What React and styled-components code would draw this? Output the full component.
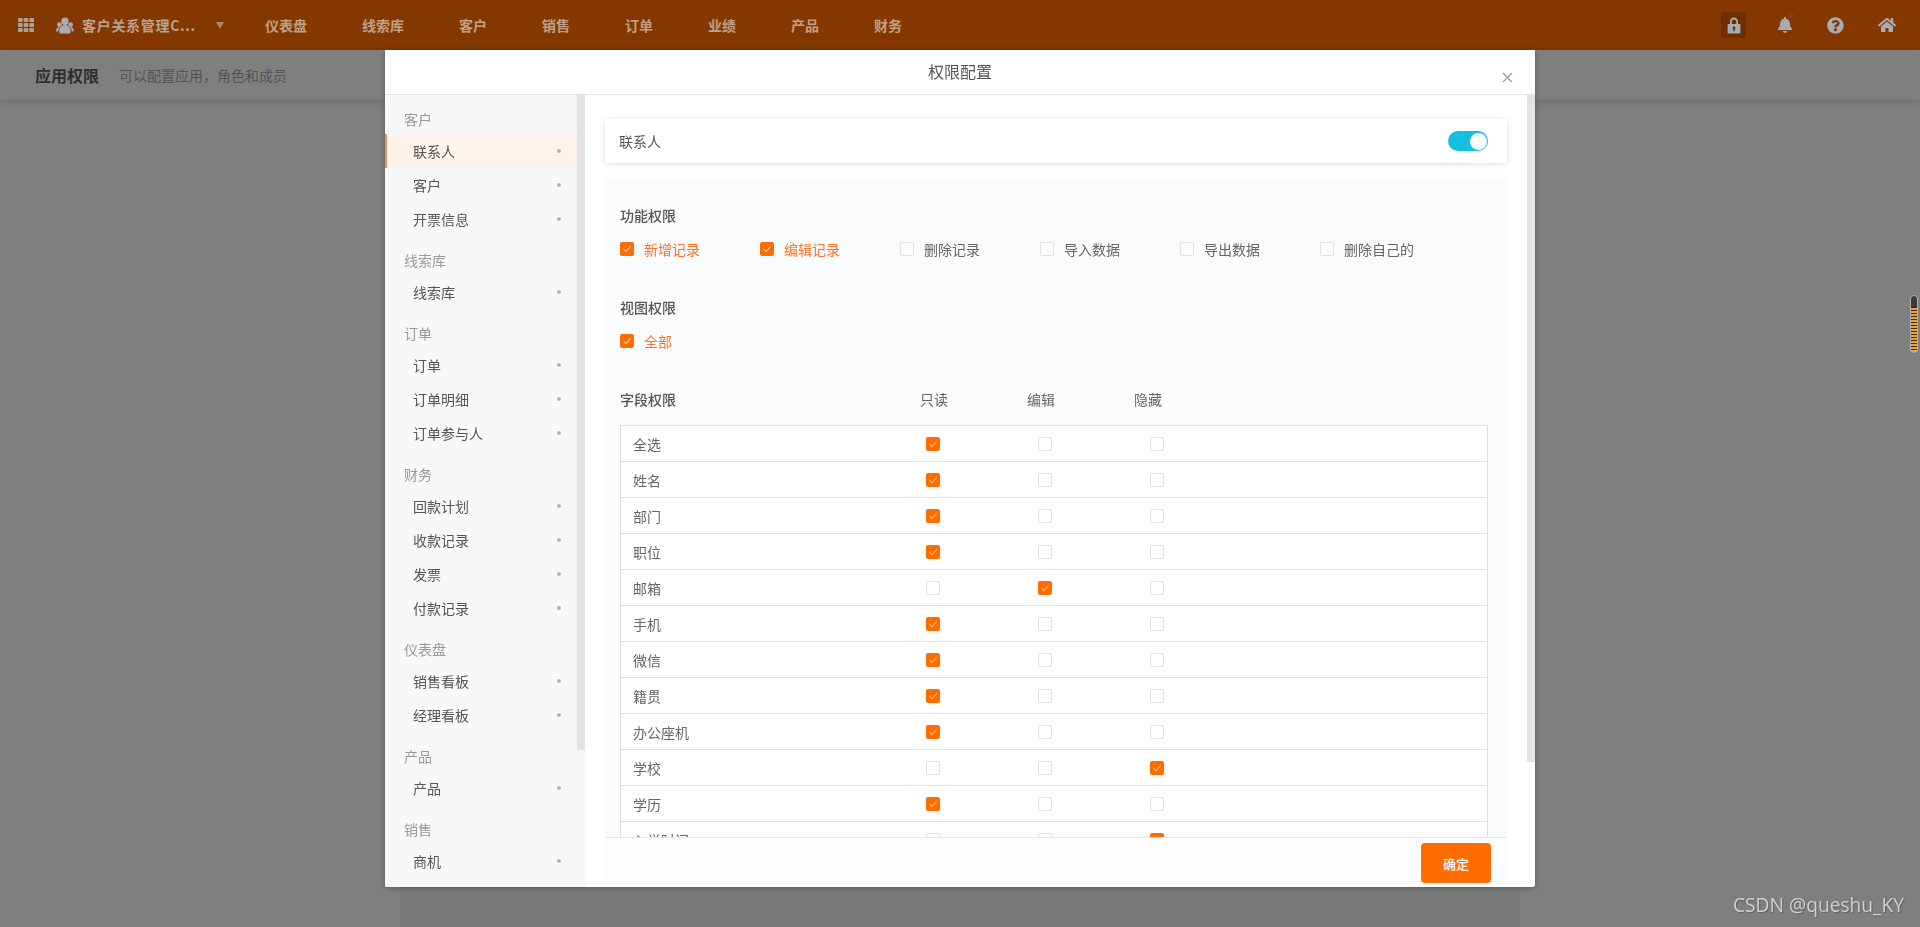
import styled, { createGlobalStyle } from 'styled-components'
import { X } from 'lucide-react'
import { FaTh, FaBell, FaQuestionCircle, FaHome } from 'react-icons/fa'

const NAV = ['仪表盘', '线索库', '客户', '销售', '订单', '业绩', '产品', '财务']

const MENU = [
  { title: '客户', items: ['联系人', '客户', '开票信息'] },
  { title: '线索库', items: ['线索库'] },
  { title: '订单', items: ['订单', '订单明细', '订单参与人'] },
  { title: '财务', items: ['回款计划', '收款记录', '发票', '付款记录'] },
  { title: '仪表盘', items: ['销售看板', '经理看板'] },
  { title: '产品', items: ['产品'] },
  { title: '销售', items: ['商机'] },
]

const ACTIONS = [
  { label: '新增记录', on: true },
  { label: '编辑记录', on: true },
  { label: '删除记录' },
  { label: '导入数据' },
  { label: '导出数据' },
  { label: '删除自己的' },
]

// mode: 0 只读, 1 编辑, 2 隐藏
const FIELDS = [
  ['全选', 0], ['姓名', 0], ['部门', 0], ['职位', 0], ['邮箱', 1], ['手机', 0],
  ['微信', 0], ['籍贯', 0], ['办公座机', 0], ['学校', 2], ['学历', 0], ['入学时间', 2],
]

export default function App() {
  return (
    <>
      <GlobalStyle />
      <TopBar>
        <GridButton><FaTh size={16} /></GridButton>
        <AppName>
          <TeamIcon />
          <span>客户关系管理C...</span>
          <Caret />
        </AppName>
        <Nav>
          {NAV.map((n) => <NavItem key={n}>{n}</NavItem>)}
        </Nav>
        <Tools>
          <ToolButton $active><LockIcon /></ToolButton>
          <ToolButton>
            <FaBell size={16} />
            <BellDot />
          </ToolButton>
          <ToolButton><FaQuestionCircle size={17} /></ToolButton>
          <ToolButton><FaHome size={18} /></ToolButton>
        </Tools>
      </TopBar>
      <SubHeader>
        <PageTitle>应用权限</PageTitle>
        <PageHint>可以配置应用，角色和成员</PageHint>
      </SubHeader>
      <PageCard />

      <Overlay>
        <Modal>
          <ModalHeader>
            权限配置
            <CloseButton><X size={17} strokeWidth={1.6} /></CloseButton>
          </ModalHeader>
          <ModalBody>
            <Sidebar>
              {MENU.map((group) => (
                <MenuGroup key={group.title}>
                  <MenuTitle>{group.title}</MenuTitle>
                  {group.items.map((item, i) => (
                    <MenuItem key={item} $active={group.title === '客户' && i === 0}>
                      {item}
                      <Dot />
                    </MenuItem>
                  ))}
                </MenuGroup>
              ))}
              <ScrollThumb $height={655} />
            </Sidebar>
            <Main>
              <Scroller>
                <ContactCard>
                  联系人
                  <Toggle />
                </ContactCard>
                <Section>
                  <SectionTitle>功能权限</SectionTitle>
                  <CheckRow>
                    {ACTIONS.map((a) => (
                      <CheckItem key={a.label} $on={a.on}>
                        <CheckBox on={a.on} />
                        {a.label}
                      </CheckItem>
                    ))}
                  </CheckRow>

                  <SectionTitle>视图权限</SectionTitle>
                  <CheckRow>
                    <CheckItem $on>
                      <CheckBox on />
                      全部
                    </CheckItem>
                  </CheckRow>

                  <FieldHead>
                    <strong>字段权限</strong>
                    <span>只读</span>
                    <span>编辑</span>
                    <span>隐藏</span>
                  </FieldHead>
                  <FieldTable>
                    {FIELDS.map(([name, mode]) => (
                      <FieldRow key={name}>
                        <FieldName>{name}</FieldName>
                        {[0, 1, 2].map((m) => <CheckBox key={m} on={m === mode} />)}
                      </FieldRow>
                    ))}
                  </FieldTable>
                </Section>
                <ScrollThumb $height={667} />
              </Scroller>
              <ModalFooter>
                <OkButton>确定</OkButton>
              </ModalFooter>
            </Main>
          </ModalBody>
        </Modal>
      </Overlay>

      <Watermark>CSDN @queshu_KY</Watermark>
      <SideGadget />
    </>
  )
}

function CheckBox({ on }) {
  return (
    <Box $on={on}>
      {on && (
        <svg width="10" height="10" viewBox="0 0 10 10" fill="none">
          <path d="M1.5 5.2 L4 7.6 L8.6 2.4" stroke="#fff" strokeWidth="0.9" />
        </svg>
      )}
    </Box>
  )
}

function TeamIcon() {
  return (
    <svg width="18" height="17" viewBox="0 0 18 17" fill="currentColor">
      <circle cx="9" cy="4.200" r="3.700" />
      <path d="M3.800 16.500c-.4-.8-.5-1.700-.5-2.600 0-3.300 2.300-6 5.700-6s5.700 2.700 5.700 6c0 .9-.1 1.800-.5 2.600z" />
      <circle cx="3.400" cy="7.600" r="2.400" />
      <circle cx="14.600" cy="7.600" r="2.400" />
      <path d="M.2 14.500c-.2-2.600 1-4.400 3.100-4.400l.6.100c-1.100 1.100-1.600 2.500-1.600 4.300zM17.800 14.500c.2-2.600-1-4.400-3.100-4.400l-.6.100c1.100 1.100 1.600 2.500 1.600 4.300z" />
    </svg>
  )
}

function LockIcon() {
  return (
    <svg width="16" height="17" viewBox="0 0 16 17">
      <path
        fillRule="evenodd"
        fill="currentColor"
        d="M4 7V4.600C4 2.300 5.700.6 8 .6s4 1.700 4 4V7h1.200c.7 0 1.200.5 1.200 1.200v7.200c0 .7-.5 1.200-1.200 1.200H2.800c-.7 0-1.200-.5-1.200-1.200V8.200C1.600 7.500 2.100 7 2.800 7H4zm1.800 0h4.400V4.600c0-1.300-.9-2.200-2.200-2.200s-2.200.9-2.200 2.200V7zM8 9.600a1.400 1.400 0 0 0-.7 2.600v2h1.400v-2A1.400 1.400 0 0 0 8 9.600z"
      />
    </svg>
  )
}

const GlobalStyle = createGlobalStyle`
  html, body {
    margin: 0;
    height: 100%;
    overflow: hidden;
    background: #fff;
  }

  body {
    font-family: "Noto Sans CJK SC", "Liberation Sans", sans-serif;
    font-size: 14px;
    color: #555;
  }

  #root {
    height: 100%;
    display: flex;
    flex-direction: column;
  }
`

const TopBar = styled.header`
  flex: none;
  height: 50px;
  display: flex;
  align-items: center;
  background: #843800;
  color: #c0a084;
`

const GridButton = styled.div`
  width: 50px;
  display: flex;
  padding-left: 18px;
  box-sizing: border-box;
  color: #a9a295;
`

const AppName = styled.div`
  width: 215px;
  display: flex;
  align-items: center;
  padding-left: 6px;
  box-sizing: border-box;
  font-weight: 700;
  letter-spacing: 0.7px;
  color: #b5a493;

  svg {
    flex: none;
    color: #a6acb2;
    margin-right: 8px;
  }
`

const Caret = styled.i`
  margin-left: 20px;
  border-style: solid;
  border-width: 7px 4.500px 0;
  border-color: #a38a70 transparent transparent;
`

const Nav = styled.nav`
  display: flex;
  gap: 55px;
`

const NavItem = styled.a`
  font-weight: 700;
  line-height: 20px;
`

const Tools = styled.div`
  margin-left: auto;
  margin-right: 21px;
  display: flex;
  gap: 26px;
  align-items: center;
`

const ToolButton = styled.div`
  position: relative;
  width: 25px;
  height: 26px;
  display: flex;
  align-items: center;
  justify-content: center;
  color: #a6acb2;
  background: ${(p) => (p.$active ? '#6f2e00' : 'transparent')};
`

const BellDot = styled.i`
  position: absolute;
  top: 1px;
  right: 3px;
  width: 5px;
  height: 5px;
  border-radius: 50%;
  background: #a3293a;
`

const SubHeader = styled.div`
  flex: none;
  height: 50px;
  display: flex;
  align-items: center;
  padding-left: 35px;
  background: #fff;
  box-shadow: 0 2px 6px rgba(0, 0, 0, 0.16);
  position: relative;
`

const PageTitle = styled.h1`
  margin: 0 20px 0 0;
  font-size: 16px;
  font-weight: 700;
  color: #5c5c5c;
`

const PageHint = styled.span`
  color: #a8a8a8;
`

const PageCard = styled.main`
  flex: 1;
  width: 1120px;
  margin: 16px auto 0;
  background: #f4f4f4;
`

const Overlay = styled.div`
  position: fixed;
  inset: 50px 0 0;
  display: flex;
  justify-content: center;
  align-items: flex-start;
  background: rgba(0, 0, 0, 0.5);
`

const Modal = styled.section`
  width: 1150px;
  height: 837px;
  display: flex;
  flex-direction: column;
  background: #fff;
  border-radius: 0 0 2px 2px;
  box-shadow: 0 1px 6px rgba(0, 0, 0, 0.3);
  overflow: hidden;
`

const ModalHeader = styled.div`
  position: relative;
  flex: none;
  height: 44px;
  line-height: 42px;
  text-align: center;
  font-size: 16px;
  color: #555;
  border-bottom: 1px solid #e4e6e8;
`

const CloseButton = styled.span`
  position: absolute;
  top: 19px;
  right: 19px;
  display: flex;
  color: #999;
`

const ModalBody = styled.div`
  flex: 1;
  min-height: 0;
  display: flex;
`

const ScrollThumb = styled.i`
  position: absolute;
  top: 0;
  right: 0;
  width: 8px;
  height: ${(p) => p.$height}px;
  background: #e2e3e4;
`

const Sidebar = styled.aside`
  position: relative;
  flex: none;
  width: 200px;
  box-sizing: border-box;
  padding: 12px 8px 0 0;
  overflow: hidden;
  background: #f6f8fa;
`

const MenuGroup = styled.div`
  & + & {
    margin-top: 12px;
  }
`

const MenuTitle = styled.div`
  height: 27px;
  line-height: 25px;
  padding-left: 19px;
  color: #999;
`

const MenuItem = styled.div`
  height: 34px;
  display: flex;
  align-items: center;
  justify-content: space-between;
  box-sizing: border-box;
  padding: 0 16px 0 28px;
  color: #555;
  background: ${(p) => (p.$active ? '#fff3ea' : 'transparent')};
  box-shadow: ${(p) => (p.$active ? 'inset 2px 0 0 #e59358' : 'none')};
`

const Dot = styled.i`
  width: 4px;
  height: 4px;
  border-radius: 50%;
  background: #b4b4b4;
`

const Main = styled.div`
  flex: 1;
  min-width: 0;
  display: flex;
  flex-direction: column;
`

const Scroller = styled.div`
  position: relative;
  flex: 1;
  min-height: 0;
  overflow: hidden;
  padding: 24px 28px 0 20px;
`

const ContactCard = styled.div`
  height: 44px;
  display: flex;
  align-items: center;
  justify-content: space-between;
  padding: 0 19px 0 14px;
  border-radius: 2px;
  background: #fff;
  box-shadow: 0 1px 6px rgba(0, 0, 0, 0.13);
`

const Toggle = styled.span`
  position: relative;
  width: 40px;
  height: 20px;
  border-radius: 10px;
  background: #14bfe0;

  &::after {
    content: '';
    position: absolute;
    top: 1.500px;
    right: 1.500px;
    width: 17px;
    height: 17px;
    border-radius: 50%;
    background: #fff;
  }
`

const Section = styled.div`
  margin-top: 15px;
  padding: 28px 19px 40px 15px;
  background: #fafbfd;
`

const SectionTitle = styled.div`
  height: 20px;
  line-height: 18px;
  font-weight: 500;
  color: #555;
`

const CheckRow = styled.div`
  display: flex;
  margin: 13px 0 39px;
`

const CheckItem = styled.label`
  width: 140px;
  height: 20px;
  line-height: 18px;
  display: flex;
  align-items: center;
  gap: 10px;
  color: ${(p) => (p.$on ? '#f4762a' : '#666')};
`

const Box = styled.span`
  flex: none;
  width: 14px;
  height: 14px;
  box-sizing: border-box;
  display: flex;
  align-items: center;
  justify-content: center;
  border-radius: 2px;
  border: 1px solid ${(p) => (p.$on ? '#ff6d00' : '#dfe2e6')};
  background: ${(p) => (p.$on ? '#ff6d00' : '#fff')};
`

const FieldHead = styled.div`
  height: 20px;
  line-height: 18px;
  display: grid;
  grid-template-columns: 300px 107px 107px 107px;
  color: #666;

  strong {
    font-weight: 500;
    color: #555;
  }
`

const FieldTable = styled.div`
  margin-top: 15px;
  background: #fff;
  border: 1px solid #dcdfe3;
  border-bottom: 0;
`

const FieldRow = styled.div`
  height: 36px;
  box-sizing: border-box;
  display: grid;
  grid-template-columns: 305px 112px 112px 112px;
  align-items: center;
  border-bottom: 1px solid #dfe1e4;
`

const FieldName = styled.span`
  padding-left: 12px;
  color: #666;
`

const ModalFooter = styled.div`
  flex: none;
  height: 50px;
  margin: 0 28px 0 20px;
  padding: 5px 16px 0 0;
  box-sizing: border-box;
  display: flex;
  justify-content: flex-end;
  align-items: flex-start;
  background: #fdfdfe;
  border-top: 1px solid #e4e6e8;
`

const OkButton = styled.button`
  width: 70px;
  height: 40px;
  padding: 0;
  border: 0;
  border-radius: 4px;
  background: #ff6d00;
  color: #fff;
  font: 500 13px "Noto Sans CJK SC", sans-serif;
`

const Watermark = styled.div`
  position: fixed;
  right: 16px;
  bottom: 8px;
  font: 19.200px/28px "Open Sans", "Noto Sans", sans-serif;
  color: #cfcfcf;
  text-shadow: 1px 1px 1px rgba(0, 0, 0, 0.25);
`

const SideGadget = styled.div`
  position: fixed;
  top: 295px;
  right: 2px;
  width: 8px;
  height: 58px;
  box-sizing: border-box;
  border: 1px solid #b0b0b0;
  border-radius: 4px;
  background:
    linear-gradient(#3a3a3a 0 11px, transparent 11px),
    repeating-linear-gradient(#e8a23a 0 2px, #3a2a10 2px 3px);
`
